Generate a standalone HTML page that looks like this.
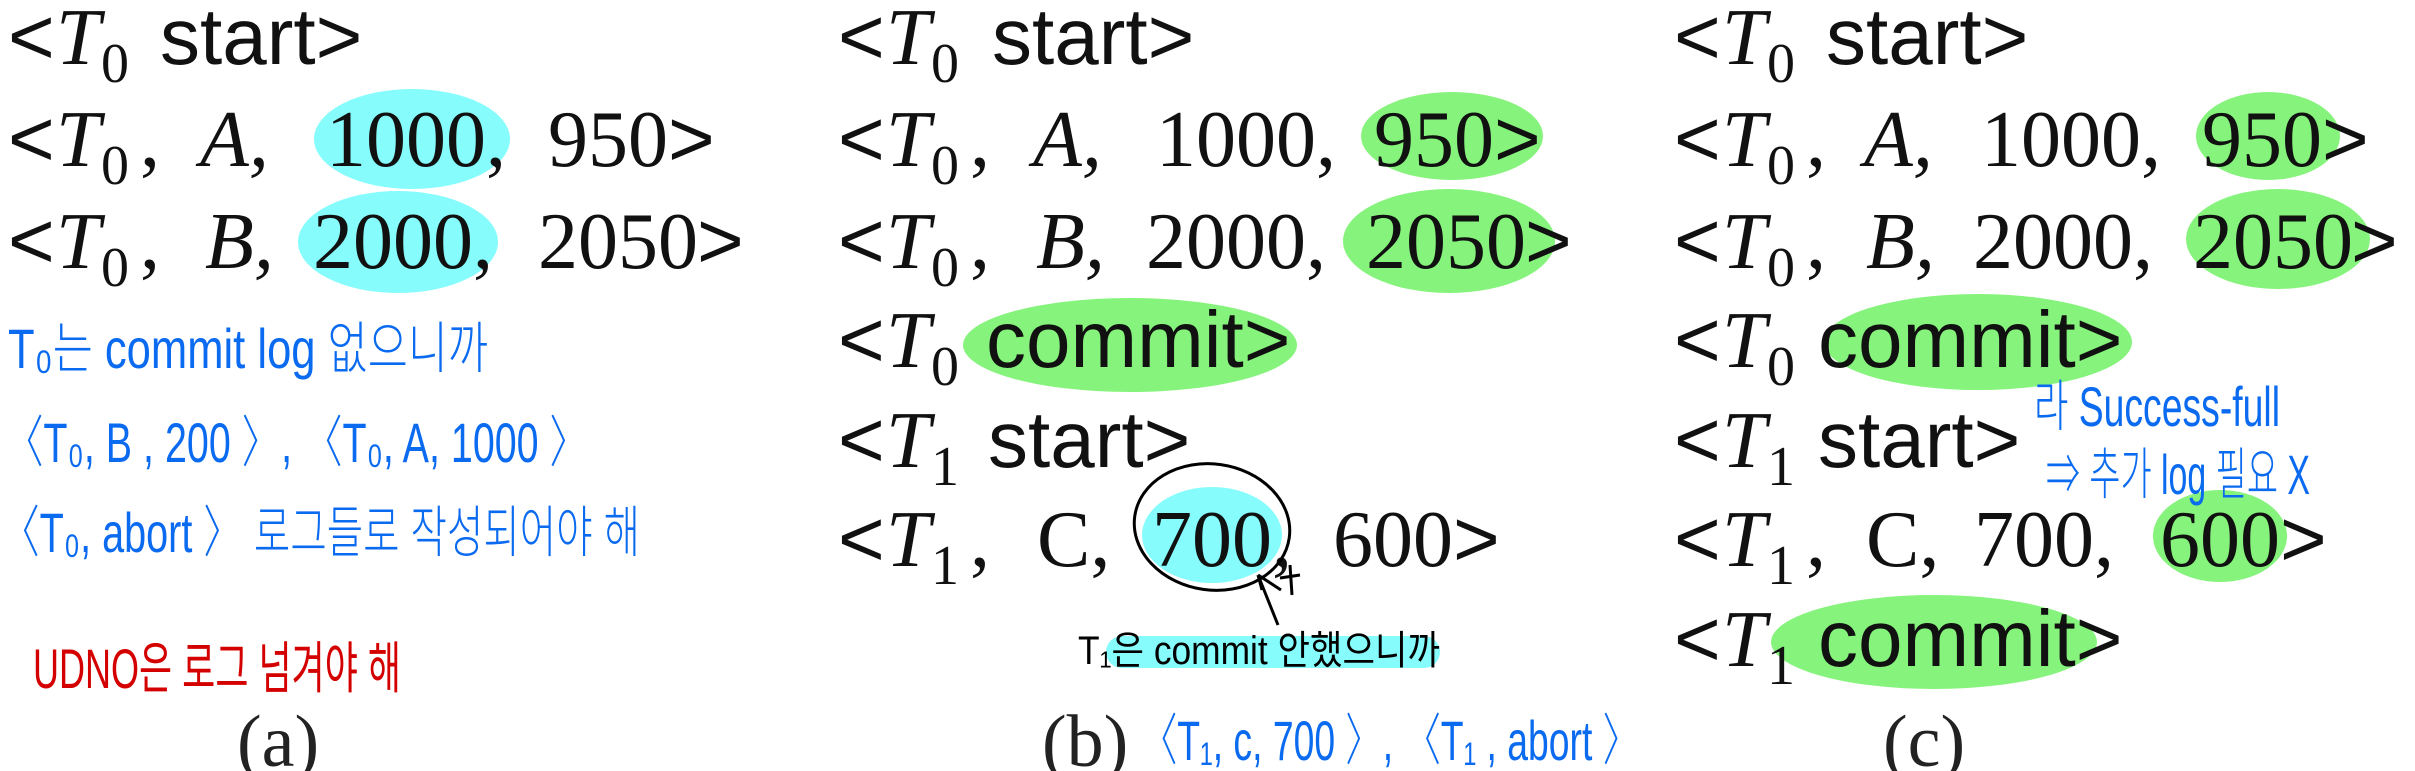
<!DOCTYPE html>
<html><head><meta charset="utf-8"><style>
html,body{margin:0;padding:0;background:#fff;width:2415px;height:771px;overflow:hidden}
svg{display:block}
.s{font-family:"Liberation Serif",serif;font-size:80px;fill:#111}
.i{font-family:"Liberation Serif",serif;font-style:italic;font-size:80px;fill:#111}
.sub{font-family:"Liberation Serif",serif;font-size:56px;fill:#111}
.h{font-family:"Liberation Sans",sans-serif;font-size:80px;fill:#111}
.bl{font-family:"Liberation Sans","Noto Sans CJK KR",sans-serif;font-size:56px;fill:#0a6af0;font-weight:300}
.rd{font-family:"Liberation Sans","Noto Sans CJK KR",sans-serif;font-size:56px;fill:#d40000}
.bk{font-family:"Liberation Sans","Noto Sans CJK KR",sans-serif;font-size:40px;fill:#000}
.lab{font-family:"Liberation Serif",serif;font-size:74px;fill:#222}
</style></head><body>
<svg width="2415" height="771" viewBox="0 0 2415 771" xmlns="http://www.w3.org/2000/svg">
<g fill="#86fcfc">
<ellipse cx="412" cy="139" rx="98" ry="50"/>
<ellipse cx="398" cy="242" rx="100" ry="51"/>
<ellipse cx="1212" cy="535" rx="70" ry="48"/>
<rect x="1106" y="636" width="334" height="32" rx="16"/>
</g>
<g fill="#86f47c">
<ellipse cx="1452" cy="136" rx="91" ry="44"/>
<ellipse cx="1449" cy="241" rx="106" ry="52"/>
<ellipse cx="1130" cy="345" rx="167" ry="47"/>
<ellipse cx="2268" cy="136" rx="72" ry="44"/>
<ellipse cx="2278" cy="239" rx="92" ry="50"/>
<ellipse cx="1978" cy="342" rx="154" ry="48"/>
<ellipse cx="2220" cy="536" rx="67" ry="46"/>
<ellipse cx="1934" cy="642" rx="163" ry="47"/>
</g>
<g>
<text class="h" x="8" y="64">&lt;</text><text class="i" x="56" y="64">T</text><text class="sub" x="101" y="82">0</text><text class="h" x="160" y="64">start&gt;</text>
<text class="h" x="8" y="166">&lt;</text><text class="i" x="56" y="166">T</text><text class="sub" x="101" y="184">0</text><text class="s" x="140" y="166">,</text><text class="i" x="200" y="166">A,</text><text class="s" x="326" y="166">1000,</text><text class="s" x="548" y="166">950</text><text class="h" x="668" y="166">&gt;</text>
<text class="h" x="8" y="268">&lt;</text><text class="i" x="56" y="268">T</text><text class="sub" x="101" y="286">0</text><text class="s" x="140" y="268">,</text><text class="i" x="205" y="268">B,</text><text class="s" x="313" y="268">2000,</text><text class="s" x="538" y="268">2050</text><text class="h" x="697" y="268">&gt;</text>
<text class="bl" x="8" y="368" textLength="480" lengthAdjust="spacingAndGlyphs">T₀는  commit  log  없으니까</text>
<text class="bl" x="4" y="462" textLength="585" lengthAdjust="spacingAndGlyphs">〈T₀, B , 200 〉, 〈T₀, A, 1000 〉</text>
<text class="bl" x="0" y="552" textLength="640" lengthAdjust="spacingAndGlyphs">〈T₀, abort 〉  로그들로  작성되어야 해</text>
<text class="rd" x="33" y="688" textLength="368" lengthAdjust="spacingAndGlyphs">UDNO은 로그 넘겨야 해</text>
<text class="lab" x="237" y="766">(a)</text>
</g>
<g transform="translate(830,0)">
<text class="h" x="8" y="64">&lt;</text><text class="i" x="56" y="64">T</text><text class="sub" x="101" y="82">0</text><text class="h" x="162" y="64">start&gt;</text>
<text class="h" x="8" y="166">&lt;</text><text class="i" x="56" y="166">T</text><text class="sub" x="101" y="184">0</text><text class="s" x="140" y="166">,</text><text class="i" x="203" y="166">A,</text><text class="s" x="326" y="166">1000,</text><text class="s" x="544" y="166">950</text><text class="h" x="664" y="166">&gt;</text>
<text class="h" x="8" y="268">&lt;</text><text class="i" x="56" y="268">T</text><text class="sub" x="101" y="286">0</text><text class="s" x="140" y="268">,</text><text class="i" x="206" y="268">B,</text><text class="s" x="316" y="268">2000,</text><text class="s" x="536" y="268">2050</text><text class="h" x="695" y="268">&gt;</text>
<text class="h" x="8" y="367">&lt;</text><text class="i" x="56" y="367">T</text><text class="sub" x="101" y="385">0</text><text class="h" x="156" y="367">commit&gt;</text>
<text class="h" x="8" y="467">&lt;</text><text class="i" x="56" y="467">T</text><text class="sub" x="101" y="485">1</text><text class="h" x="158" y="467">start&gt;</text>
<text class="h" x="8" y="566">&lt;</text><text class="i" x="56" y="566">T</text><text class="sub" x="101" y="584">1</text><text class="s" x="140" y="566">,</text><text class="s" x="207" y="566">C,</text><text class="s" x="322" y="566">700,</text><text class="s" x="503" y="566">600</text><text class="h" x="623" y="566">&gt;</text>
<text class="lab" x="212" y="766">(b)</text>
</g>
<ellipse cx="1212" cy="527" rx="78" ry="63" fill="none" stroke="#000" stroke-width="3" transform="rotate(8 1212 527)"/>
<path d="M1281 590 L1258 575 M1258 575 L1262 590 M1258 575 L1278 625 M1290 565 L1292 595 M1280 578 L1300 575" stroke="#000" stroke-width="3" fill="none"/>
<text class="bk" x="1078" y="664" textLength="362" lengthAdjust="spacingAndGlyphs">T₁은 commit 안했으니까</text>
<text class="bl" x="1140" y="760" textLength="500" lengthAdjust="spacingAndGlyphs">〈T₁, c, 700 〉, 〈T₁ , abort 〉</text>
<g transform="translate(1666,0)">
<text class="h" x="8" y="64">&lt;</text><text class="i" x="56" y="64">T</text><text class="sub" x="101" y="82">0</text><text class="h" x="160" y="64">start&gt;</text>
<text class="h" x="8" y="166">&lt;</text><text class="i" x="56" y="166">T</text><text class="sub" x="101" y="184">0</text><text class="s" x="140" y="166">,</text><text class="i" x="198" y="166">A,</text><text class="s" x="315" y="166">1000,</text><text class="s" x="536" y="166">950</text><text class="h" x="656" y="166">&gt;</text>
<text class="h" x="8" y="268">&lt;</text><text class="i" x="56" y="268">T</text><text class="sub" x="101" y="286">0</text><text class="s" x="140" y="268">,</text><text class="i" x="200" y="268">B,</text><text class="s" x="307" y="268">2000,</text><text class="s" x="527" y="268">2050</text><text class="h" x="685" y="268">&gt;</text>
<text class="h" x="8" y="367">&lt;</text><text class="i" x="56" y="367">T</text><text class="sub" x="101" y="385">0</text><text class="h" x="152" y="367">commit&gt;</text>
<text class="h" x="8" y="467">&lt;</text><text class="i" x="56" y="467">T</text><text class="sub" x="101" y="485">1</text><text class="h" x="152" y="467">start&gt;</text>
<text class="h" x="8" y="566">&lt;</text><text class="i" x="56" y="566">T</text><text class="sub" x="101" y="584">1</text><text class="s" x="140" y="566">,</text><text class="s" x="200" y="566">C,</text><text class="s" x="308" y="566">700,</text><text class="s" x="494" y="566">600</text><text class="h" x="614" y="566">&gt;</text>
<text class="h" x="8" y="666">&lt;</text><text class="i" x="56" y="666">T</text><text class="sub" x="101" y="684">1</text><text class="h" x="152" y="666">commit&gt;</text>
<text class="lab" x="217" y="766">(c)</text>
</g>
<text class="bl" x="2034" y="426" textLength="246" lengthAdjust="spacingAndGlyphs">라 Success-full</text>
<text class="bl" x="2046" y="494" textLength="264" lengthAdjust="spacingAndGlyphs">⇒ 추가 log 필요 X</text>
</svg>
</body></html>
